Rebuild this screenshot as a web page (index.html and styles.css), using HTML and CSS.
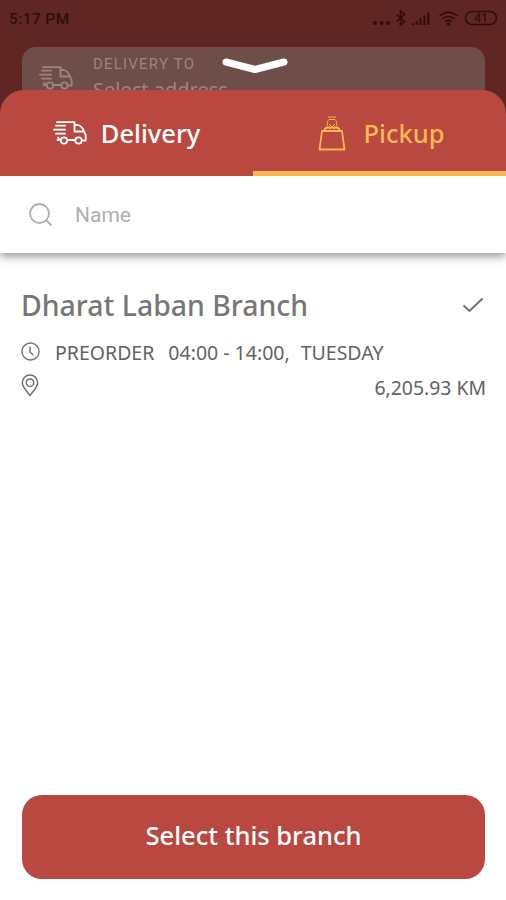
FILE: index.html
```
<!doctype html>
<html lang="en">
    <head>
        <meta charset="UTF-8" />
        <meta name="viewport" content="width=device-width, initial-scale=1.0" />
        <title>Select branch</title>
        <link rel="stylesheet" href="styles.css">
    </head>
    <body>
        <!-- shared icons -->
        <svg class="sprite" width="0" height="0">
            <symbol id="truck" viewBox="0 0 34 24">
                <g fill="none" stroke="currentColor" stroke-width="1.8" stroke-linecap="round" stroke-linejoin="round">
                    <path d="M4 1.2h17.500v2.800M3 4.700h9M1 8.700h11M3 12.700h9M5 16.500l2 2.500" />
                    <path d="M21.500 4v6.500h9.500M21.500 4h3.500c3 1 5 3.500 6 6.500l1.700 3.500v5.500h-3" />
                    <circle cx="11" cy="19.500" r="3.200" />
                    <circle cx="25.500" cy="19.500" r="3.200" />
                    <path d="M14.500 19h7.500M4.500 19h3" />
                </g>
            </symbol>
        </svg>

        <div class="backdrop">
            <div class="status-bar">
                <span class="time">5:17 PM</span>
                <svg class="status-icons" viewBox="0 0 128 20">
                    <g fill="#2e0d0c">
                        <circle cx="4" cy="14" r="2" />
                        <circle cx="10.500" cy="14" r="2" />
                        <circle cx="17" cy="14" r="2" />
                        <path d="M41 14h2v2h-2zM44.800 12h2v4h-2zM48.600 9h2v7h-2zM52.400 6.500h2V16h-2zM56.200 3.500h2.200V16h-2.200z" />
                        <circle cx="77.500" cy="15" r="1.800" />
                    </g>
                    <g fill="none" stroke="#2e0d0c" stroke-width="1.600">
                        <path d="M25.500 5.500l8 7-4 3.500V2l4 3.500-8 7" />
                        <path d="M68.500 7q9-7.500 18 0M71.300 10q6.200-5 12.400 0M74.200 12.700q3.300-2.600 6.600 0" />
                        <rect x="94.500" y="2.500" width="31" height="13" rx="6.500" />
                    </g>
                    <text class="battery" x="110" y="13.300" text-anchor="middle">41</text>
                </svg>
            </div>
            <div class="address-card">
                <svg class="icon-truck"><use href="#truck" /></svg>
                <div class="address-text">
                    <div class="address-label">DELIVERY TO</div>
                    <div class="address-value">Select address</div>
                </div>
            </div>
            <svg class="chevron" viewBox="0 0 66 18">
                <path d="M4 5l29 7.500L62 5" fill="none" stroke="#fff" stroke-width="7" stroke-linecap="round" stroke-linejoin="round" />
            </svg>
        </div>

        <div class="sheet">
            <div class="tabs">
                <div class="tab">
                    <svg class="icon-truck"><use href="#truck" /></svg>
                    <span class="tab-delivery">Delivery</span>
                </div>
                <div class="tab active">
                    <svg class="icon-bag" viewBox="0 0 28 35">
                        <g fill="none" stroke="currentColor" stroke-width="1.800" stroke-linejoin="round">
                            <path d="M4 15h20l2.500 18.500h-25z" />
                            <path d="M6.500 15c0-2.500 2-3.500 4-3.500h7c2 0 4 1 4 3.500" />
                            <path d="M10 1h8M11 3.500h6M10.500 11.500c-2-3-1.500-6 .5-8M17.500 11.500c2-3 1.500-6-.5-8M11 8l3 3 3-3M11 13.500l3-2.500 3 2.500" stroke-width="1" />
                        </g>
                    </svg>
                    <span class="tab-pickup">Pickup</span>
                </div>
            </div>

            <div class="search">
                <svg class="icon-search" viewBox="0 0 24 24">
                    <path d="M17 17l5.500 5.500" />
                    <circle cx="10.500" cy="10.500" r="9.500" />
                </svg>
                <span>Name</span>
            </div>

            <div class="branch">
                <div class="branch-head">
                    <span class="branch-name">Dharat Laban Branch</span>
                    <svg class="icon-check" viewBox="0 0 22 16">
                        <path d="M1.500 8.500l6 5.500L20.500 1.500" />
                    </svg>
                </div>
                <div class="branch-row">
                    <svg class="icon-clock" viewBox="0 0 20 20">
                        <circle cx="10" cy="10" r="9" />
                        <path d="M9.500 5v5.500l3.500 3.500" />
                    </svg>
                    <span class="preorder">PREORDER</span>
                    <span class="hours">04:00 - 14:00,</span>
                    <span class="day">TUESDAY</span>
                </div>
                <div class="branch-row">
                    <svg class="icon-pin" viewBox="0 0 18 23">
                        <path d="M9 21.500C6 17.500 1.300 13 1.300 8.700a7.700 7.700 0 0 1 15.400 0c0 4.300-4.700 8.800-7.700 12.800z" />
                        <circle cx="9" cy="8.700" r="3.700" />
                    </svg>
                    <span class="distance">6,205.93 KM</span>
                </div>
            </div>

            <button class="select-btn">Select this branch</button>
        </div>
    </body>
</html>
```
FILE: styles.css
```
* {
    box-sizing: border-box;
}

body {
    margin: 0;
    height: 900px;
    overflow: hidden;
    display: flex;
    flex-direction: column;
    font-family: "Noto Sans", "Open Sans", sans-serif;
    background-color: #fff;
}

.sprite {
    position: absolute;
}

svg {
    flex-shrink: 0;
}

/* dimmed page behind the sheet */
.backdrop {
    position: relative;
    height: 125px;
    flex-shrink: 0;
    background-color: #602624;
    padding: 0 21px 0 22px;
}

.status-bar {
    display: flex;
    justify-content: space-between;
    align-items: center;
    height: 47px;
    padding-bottom: 10px;
    margin: 0 -14px 0 -13px;
    color: #2e0d0c;
}

.time {
    font: 500 15.5px Roboto, sans-serif;
    letter-spacing: 0.4px;
}

.status-icons {
    width: 128px;
    height: 20px;
}

.battery {
    font: 500 12px Roboto, sans-serif;
    fill: #2e0d0c;
}

.address-card {
    display: flex;
    height: 78px;
    padding: 19px 17px 0;
    background-color: #6f4d48;
    border-radius: 14px 14px 0 0;
    color: #9c8580;
}

.address-text {
    margin: -11px 0 0 20px;
}

.address-label {
    font: 15px/18px Roboto, sans-serif;
    letter-spacing: 1.2px;
}

.address-value {
    margin-top: 4px;
    font-size: 20px;
    line-height: 26px;
}

.icon-truck {
    width: 34px;
    height: 24px;
}

.chevron {
    position: absolute;
    top: 57px;
    left: 222px;
    width: 66px;
    height: 18px;
}

.sheet {
    position: relative;
    flex: 1;
    display: flex;
    flex-direction: column;
    margin-top: -35px;
}

.tabs {
    position: relative;
    z-index: 1;
    display: flex;
    height: 86px;
    background-color: #b84840;
    border-radius: 24px 24px 0 0;
    overflow: hidden;
}

.tab {
    width: 50%;
    display: flex;
    align-items: center;
    justify-content: center;
    gap: 14px;
    color: #fff;
    font-size: 25.5px;
    font-weight: 500;
}

.tab.active {
    gap: 17px;
    padding-top: 5px;
    padding-left: 4px;
    border-bottom: 5px solid #f9b753;
    color: #f9b753;
}

.icon-bag {
    width: 28px;
    height: 35px;
}

.search {
    display: flex;
    align-items: center;
    gap: 22px;
    height: 77px;
    padding-left: 29px;
    background-color: #fff;
    box-shadow: 0 3px 9px rgba(0, 0, 0, 0.45);
    color: #afafaf;
    font: 21px Roboto, sans-serif;
}

.icon-search {
    width: 24px;
    height: 24px;
    fill: none;
    stroke: #afafaf;
    stroke-width: 1.8;
}

.branch {
    flex: 1;
    padding: 31px 20px 0 21px;
    color: #626262;
}

.branch-head {
    display: flex;
    align-items: center;
    justify-content: space-between;
    height: 42px;
    padding-right: 2px;
}

.branch-name {
    color: #777;
    font-size: 28.4px;
    font-weight: 500;
}

.branch-row {
    display: flex;
    align-items: center;
    height: 34px;
    margin-top: 9px;
    font-size: 19.5px;
}

.branch-row + .branch-row {
    margin-top: 1px;
}

.distance {
    font-size: 19.4px;
}

.branch-row svg,
.icon-check {
    fill: none;
    stroke: #707070;
    stroke-width: 1.5;
}

.icon-check {
    width: 22px;
    height: 16px;
    stroke-width: 2;
}

.icon-clock {
    width: 19px;
    height: 19px;
    margin-top: -2px;
}

.icon-pin {
    width: 18px;
    height: 23px;
    margin-top: -4px;
}

.preorder {
    margin-left: 15px;
}

.hours {
    margin-left: 14px;
}

.day {
    margin-left: 11px;
}

.distance {
    margin-left: auto;
}

.select-btn {
    height: 84px;
    margin: 0 21px 21px 22px;
    padding-bottom: 5px;
    border: none;
    border-radius: 20px;
    background-color: #b84840;
    color: #fff;
    font-family: inherit;
    font-size: 25.5px;
    font-weight: 500;
}
```
